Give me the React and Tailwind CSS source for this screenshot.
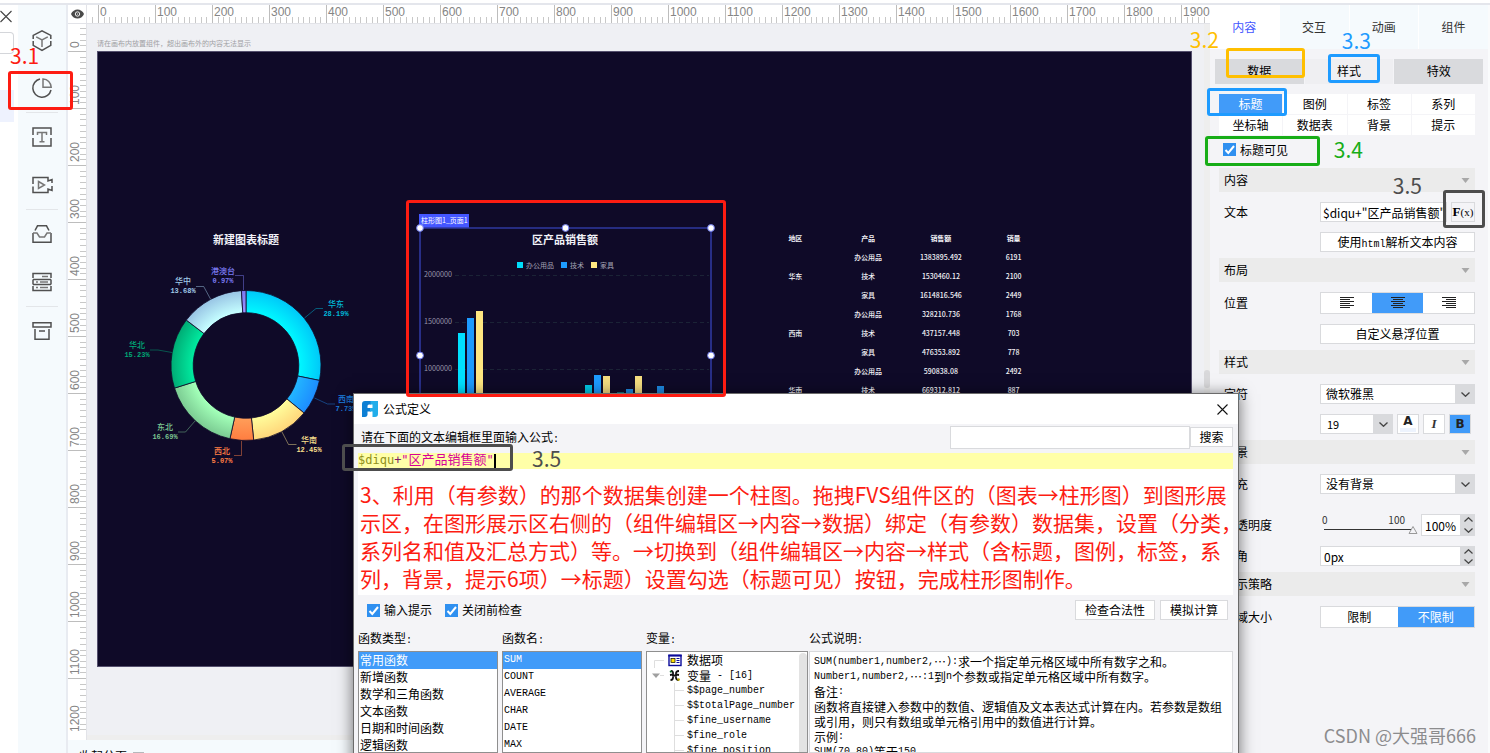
import React from "react";

const SANS = "font-['Noto_Sans_CJK_SC','Noto_Sans',sans-serif]";

/* ---------- small helpers ---------- */

// Latin runs are set in a half-width mono face beside full-width Chinese glyphs.
function Mixed({ children }) {
  const parts = String(children).match(/[\x20-\x7e]+|[^\x20-\x7e]+/g) || [];
  return parts.map((p, i) =>
    /^[\x20-\x7e]/.test(p) ? (
      <span key={i} className="whitespace-pre font-['Liberation_Mono',monospace] text-[10px]">{p}</span>
    ) : (
      <span key={i}>{p}</span>
    )
  );
}

function Check({ id, label }) {
  return (
    <label htmlFor={id} className="flex items-center gap-1">
      <span className="relative block size-[13px]">
        <input id={id} type="checkbox" defaultChecked className="block size-[13px] appearance-none bg-[#2f90f0]" />
        <svg viewBox="0 0 13 13" className="pointer-events-none absolute inset-0 size-[13px]" fill="none" stroke="#fff" strokeWidth="2">
          <path d="M2.5 7 L5.3 10 L11 3" />
        </svg>
      </span>
      {label}
    </label>
  );
}

/* ---------- left side ---------- */

const navIcons = {
  cube: (
    <>
      <path d="M1.2 9 V5.4 L10 0.8 L18.8 5.4 V9 M1.2 11 V15.4 L10 20.4 L18.8 15.4 V11" />
      <path d="M4.2 6.8 L10 9.8 L15.8 6.8 M10 9.8 V17" stroke="#777" />
    </>
  ),
  pie: (
    <>
      <path d="M8 1 A9.2 9.2 0 1 0 19 12" />
      <path d="M11 1 V9.3 H19.2 C19 4.5 15.6 1.2 11 1 Z" stroke="#777" />
    </>
  ),
  text: (
    <>
      <path d="M1 8 V1 H19 V8 M1 11 V19 H19 V11" />
      <path d="M5.5 8 V5.6 H14.5 V8 M10 5.6 V14.5 M7.5 14.8 H12.5" stroke="#777" />
    </>
  ),
  video: (
    <>
      <path d="M1 9 V2.6 H16 V6 L20 4.5 V8 M1 11.5 V17.4 H16 V14 L20 15.5 V11" />
      <path d="M6.5 6.5 L12.5 10 L6.5 13.5 Z" stroke="#777" />
    </>
  ),
  inbox: (
    <>
      <path d="M3 6.5 L5.5 1.8 H14.5 L17 6.5 M1 9 V18.2 H19 V9" />
      <path d="M1 9 H5 L7.5 13 H12.5 L15 9 H19" stroke="#777" />
    </>
  ),
  server: (
    <>
      <path d="M1 6 V1.6 H19 V6 M1 7.4 H19 M1 7.4 V12.6 M19 7.4 V12.6 M1 12.6 H19 M1 14 V18.4 H19 V14" />
      <path d="M10 4.6 H16 M4 10 H6 M8 10 H16 M4 15.6 H6 M8 15.6 H16" stroke="#777" />
    </>
  ),
  archive: (
    <>
      <path d="M1 1.8 H19 V6 H1 Z M3 8 V18.2 H17 V8" />
      <path d="M7 10 H13" />
    </>
  ),
};

function NavButton({ icon, label }) {
  return (
    <button type="button" aria-label={label} className="flex h-12 w-full items-center justify-center">
      <svg viewBox="0 0 20 20" className="size-5 overflow-visible" fill="none" stroke="#505050" strokeWidth="1.5">
        {navIcons[icon]}
      </svg>
    </button>
  );
}

const Rule = () => <div className="mx-2 h-px w-8 bg-[#e3e6e9]" />;

function LeftBars() {
  return (
    <>
      <div className="flex w-[18px] shrink-0 flex-col bg-white">
        <button type="button" aria-label="关闭" className="mt-[5px] h-[13px] w-3">
          <svg viewBox="0 0 12 13" className="h-[13px] w-3" stroke="#444" strokeWidth="1.1">
            <path d="M0.5 1 L11.5 12 M11.5 1 L0.5 12" />
          </svg>
        </button>
        <div className="mt-[9px] h-[22px] w-[14px] rounded-r-sm border border-l-0 border-[#d4d6da]" />
        <div className="mt-9 h-8 w-[14px] bg-[#eef2fe]" />
      </div>
      <nav className="flex w-[50px] shrink-0 flex-col border-r-2 border-[#e8ebf1] bg-[#f5fafd] pt-[11px]">
        <NavButton icon="cube" label="组件" />
        <NavButton icon="pie" label="图表" />
        <Rule />
        <NavButton icon="text" label="文本" />
        <NavButton icon="video" label="视频" />
        <Rule />
        <NavButton icon="inbox" label="素材" />
        <NavButton icon="server" label="数据" />
        <Rule />
        <NavButton icon="archive" label="归档" />
      </nav>
    </>
  );
}

/* ---------- rulers ---------- */

const STEP = 5.7;

function TopRuler() {
  const ticks = Array.from({ length: 197 }, (_, i) => i - 1);
  return (
    <svg className="h-[18px] w-full font-['Liberation_Sans',sans-serif]" shapeRendering="crispEdges">
      {ticks.map((t) => {
        const major = t % 10 === 0;
        return <rect key={t} x={Math.round(11 + t * STEP)} y={major ? 0 : 12} width="1" height={major ? 18 : 6} fill={major ? "#bdbdbd" : "#c8c8c8"} />;
      })}
      {Array.from({ length: 20 }, (_, k) => (
        <text key={k} x={13 + k * 57} y="11" fontSize="12" fill="#858585">{k * 100}</text>
      ))}
    </svg>
  );
}

function SideRuler() {
  const ticks = Array.from({ length: 124 }, (_, i) => i - 4);
  return (
    <svg className="h-full w-[18px] font-['Liberation_Sans',sans-serif]" shapeRendering="crispEdges">
      {ticks.map((t) => {
        const major = t % 10 === 0;
        return <rect key={t} x={major ? 0 : 12} y={Math.round(27 + t * STEP)} width={major ? 18 : 6} height="1" fill={major ? "#bdbdbd" : "#c8c8c8"} />;
      })}
      {Array.from({ length: 13 }, (_, k) => (
        <text key={k} transform={`translate(11 ${24 + k * 57}) rotate(-90)`} fontSize="12" fill="#858585">{k * 100}</text>
      ))}
    </svg>
  );
}

/* ---------- charts ---------- */

const slices = [
  { name: "华东", v: 28.19, a: "#00f6ff", b: "#00c8f8", c: "#00b8d8", tx: 336, ty: 304, line: "323,308.5 316,308.5 304.5,318" },
  { name: "西南", v: 7.73, a: "#22b4ff", b: "#1d8cff", c: "#1d80e0", tx: 346, ty: 399, line: "335,404 327.5,404 314.5,398" },
  { name: "华南", v: 12.45, a: "#fffb9a", b: "#ffd67a", c: "#f7df8c", tx: 309, ty: 440, line: "296.5,444.5 288.5,444.5 282,432" },
  { name: "西北", v: 5.07, a: "#ff9c58", b: "#ff7d40", c: "#ff7f45", tx: 222, ty: 451, line: "234,455.5 241.5,455.5 241.5,441" },
  { name: "东北", v: 16.69, a: "#a2ffb8", b: "#7bcb92", c: "#7cc892", tx: 165, ty: 427, line: "178,432 185.5,432 195,421" },
  { name: "华北", v: 15.23, a: "#00e89e", b: "#00ab74", c: "#00a876", tx: 137, ty: 345, line: "150,350 158,350 172,352.5" },
  { name: "华中", v: 13.68, a: "#c4fdff", b: "#98c4e4", c: "#a0cbe8", tx: 183, ty: 281, line: "196,286.5 203.7,286.5 210.5,299" },
  { name: "港澳台", v: 0.97, a: "#9a92ff", b: "#7b78f0", c: "#7b7bf2", tx: 223, ty: 271, line: "235,275.5 243.5,275.5 243.5,290" },
];

function Donut() {
  const cx = 246, cy = 365.5, R = 75, r = 52.8;
  let acc = 0;
  const at = (rad, f) => {
    const t = f * 2 * Math.PI - Math.PI / 2;
    return `${(cx + rad * Math.cos(t)).toFixed(2)} ${(cy + rad * Math.sin(t)).toFixed(2)}`;
  };
  return (
    <svg viewBox="118 230 240 240" className="absolute left-5 top-[178px] size-60">
      <text x="246" y="244" textAnchor="middle" fontSize="11" fontWeight="700" fill="#f2f2f8">新建图表标题</text>
      {slices.map((s, i) => {
        const a0 = acc / 100.01;
        acc += s.v;
        const a1 = acc / 100.01;
        const big = a1 - a0 > 0.5 ? 1 : 0;
        return (
          <g key={s.name}>
            <radialGradient id={`slice${i}`} gradientUnits="userSpaceOnUse" cx={cx} cy={cy} r={R}>
              <stop offset="0.72" stopColor={s.a} />
              <stop offset="1" stopColor={s.b} />
            </radialGradient>
            <path
              d={`M${at(R, a0)} A${R} ${R} 0 ${big} 1 ${at(R, a1)} L${at(r, a1)} A${r} ${r} 0 ${big} 0 ${at(r, a0)} Z`}
              fill={`url(#slice${i})`}
              stroke="#0f0a28"
              strokeWidth="0.8"
            />
            <polyline points={s.line} fill="none" stroke={s.c} strokeOpacity="0.6" strokeWidth="0.8" />
            <text x={s.tx} y={s.ty + 3} textAnchor="middle" fontSize="8" fontWeight="500" fill={s.c}>{s.name}</text>
            <text x={s.tx} y={s.ty + 12} textAnchor="middle" fontSize="7" fontFamily="Liberation Mono" fontWeight="700" fill={s.c}>{s.v.toFixed(2)}%</text>
          </g>
        );
      })}
    </svg>
  );
}

const bars = [
  [458, 333, "#00e0ff"], [467, 318, "#1d9bff"], [476, 311, "#ffe680"],
  [539, 393, "#6d6650"],
  [585, 385, "#00c8e6"], [594, 375, "#1d9bff"], [603, 376, "#f5dd80"],
  [617, 392, "#0d7080"], [626, 389, "#1d88e0"], [635, 376, "#f5dd80"],
  [657, 386, "#1d88e0"],
];

function BarChart() {
  return (
    <svg viewBox="414 208 304 192" className="absolute left-[316px] top-[156px] h-48 w-[304px]">
      <rect x="419" y="214" width="50" height="14" fill="#4456ff" />
      <text x="421" y="223" fontSize="7" fill="#fff">柱形图1_页面1</text>
      <text x="565" y="244" textAnchor="middle" fontSize="11" fontWeight="700" fill="#f2f2f8">区产品销售额</text>
      {[["办公用品", 517, "#00dcfa"], ["技术", 561, "#1d9bff"], ["家具", 591, "#ffe680"]].map(([n, x, c]) => (
        <g key={n}>
          <rect x={x} y="262" width="6" height="6" fill={c} />
          <text x={x + 9} y="267.5" fontSize="7" fill="#a3a1b3">{n}</text>
        </g>
      ))}
      {[["2000000", 275], ["1500000", 322], ["1000000", 369]].map(([n, y]) => (
        <g key={n}>
          <text x="452" y={y + 2} textAnchor="end" fontSize="7.2" fill="#9795a8">{n}</text>
          <path d={`M455 ${y + 0.5} H709`} stroke="#1b2336" strokeWidth="1" strokeDasharray="4 3" />
        </g>
      ))}
      {bars.map(([x, y, c]) => (
        <rect key={x} x={x} y={y} width="7" height={400 - y} fill={c} />
      ))}
      <path d="M420 400 V228 H711 V400" fill="none" stroke="#2f389f" strokeWidth="1.6" />
      {[[420, 228], [565.5, 228], [711, 228], [420, 355.5], [711, 355.5]].map(([x, y]) => (
        <circle key={`${x}-${y}`} cx={x} cy={y} r="3.4" fill="#fff" stroke="#6a76e8" strokeWidth="1" />
      ))}
    </svg>
  );
}

const tableRows = [
  ["", "办公用品", "1383895.492", "6191"],
  ["华东", "技术", "1530460.12", "2100"],
  ["", "家具", "1614816.546", "2449"],
  ["", "办公用品", "328210.736", "1768"],
  ["西南", "技术", "437157.448", "703"],
  ["", "家具", "476353.892", "778"],
  ["", "办公用品", "590838.08", "2492"],
  ["华南", "技术", "669312.812", "887"],
];

function SalesTable() {
  return (
    <table className="absolute left-[661px] top-[177px] w-[291px] table-fixed border-collapse text-center text-[7px] font-medium leading-[19px] text-[#f2f2f6]">
      <thead>
        <tr>
          {["地区", "产品", "销售额", "销量"].map((h) => (
            <th key={h} className="p-0 font-bold">{h}</th>
          ))}
        </tr>
      </thead>
      <tbody>
        {tableRows.map((r, i) => (
          <tr key={i}>
            {r.map((c, j) => (
              <td key={j} className="h-[19px] p-0">{c}</td>
            ))}
          </tr>
        ))}
      </tbody>
    </table>
  );
}

function Workspace() {
  return (
    <main className="flex min-w-0 flex-1 flex-col">
      <div className="flex h-[19px] shrink-0 border-b border-[#e2e3e8] bg-white">
        <div className="flex w-[19px] shrink-0 items-center justify-center border-r border-[#e2e3e8]">
          <svg viewBox="0 0 13 10" className="h-[10px] w-[13px]">
            <path d="M0 5 C2.5 -1 10.5 -1 13 5 C10.5 11 2.5 11 0 5 Z" fill="#4a4a4a" />
            <circle cx="6.5" cy="5" r="2.2" fill="#4a4a4a" stroke="#fff" strokeWidth="0.9" />
            <circle cx="6.5" cy="5" r="0.6" fill="#fff" />
          </svg>
        </div>
        <div className="min-w-0 flex-1"><TopRuler /></div>
      </div>
      <div className="flex min-h-0 flex-1">
        <div className="w-[19px] shrink-0 overflow-hidden border-r border-[#e2e3e8] bg-white"><SideRuler /></div>
        <div className="flex min-w-0 flex-1 flex-col bg-[#eff0f4]">
          <div className="flex min-h-0 flex-1">
            <div className="min-w-0 flex-1 pl-[10px] pr-3">
              <p className="pb-[3px] pt-[14px] text-[7px] leading-[10px] text-[#a0a0a4]">请在画布内放置组件，超出画布外的内容无法显示</p>
              <div className="relative aspect-[16/9] w-full overflow-hidden border border-[#55506e] bg-[#0f0a28]">
                <Donut />
                <BarChart />
                <SalesTable />
              </div>
            </div>
            <div className="flex w-[6px] shrink-0 flex-col bg-[#eeeeee] pt-[346px]">
              <div className="h-[18px] rounded-full bg-[#d9d9db]" />
            </div>
          </div>
          <div className="h-[5px] shrink-0 bg-[#eeeeee]" />
        </div>
      </div>
      <footer className="h-[13px] shrink-0 overflow-hidden bg-[#f5fafd]">
        <div className="flex h-8 items-center gap-[6px] pl-[11px] text-xs">
          <span>收起分页</span>
          <span className="mb-2 h-px w-[11px] bg-[#b5b8bc]" />
        </div>
      </footer>
    </main>
  );
}

/* ---------- property panel ---------- */

const box = "border border-[#d9dadd] bg-white";

function Section({ title, children }) {
  return (
    <section className="mt-[6px]">
      <h3 className="flex h-6 items-center justify-between bg-[#ebebeb] pl-[5px] pr-[5px]">
        {title}
        <svg viewBox="0 0 9 5" className="h-[5px] w-[9px]"><path d="M0.5 0 H8.5 L4.5 5 Z" fill="#a8a8a8" /></svg>
      </h3>
      <div className="flex flex-col gap-[10px] pt-[10px]">{children}</div>
    </section>
  );
}

function Row({ label, children }) {
  return (
    <div className="flex items-center pl-[5px]">
      <span className="w-24 shrink-0">{label}</span>
      <div className="flex min-w-0 flex-1">{children}</div>
    </div>
  );
}

function Select({ label, value, width, pad }) {
  return (
    <span className={`relative flex h-5 ${width}`}>
      <select aria-label={label} className={`h-5 w-full appearance-none ${box} ${pad}`}>
        <option>{value}</option>
      </select>
      <span className="pointer-events-none absolute inset-y-0 right-0 flex w-5 items-center justify-center bg-[#d9dadd]">
        <svg viewBox="0 0 9 5" className="h-[5px] w-[9px]" fill="none" stroke="#444" strokeWidth="1.3"><path d="M0.5 0.5 L4.5 4.3 L8.5 0.5" /></svg>
      </span>
    </span>
  );
}

function Spinner() {
  return (
    <span className="flex w-[14px] shrink-0 flex-col items-center justify-around bg-[#d9dadd]">
      <button type="button" aria-label="增加"><svg viewBox="0 0 9 5" className="block h-[5px] w-[9px]" fill="none" stroke="#444" strokeWidth="1.2"><path d="M0.5 4.5 L4.5 0.7 L8.5 4.5" /></svg></button>
      <button type="button" aria-label="减少"><svg viewBox="0 0 9 5" className="block h-[5px] w-[9px]" fill="none" stroke="#444" strokeWidth="1.2"><path d="M0.5 0.5 L4.5 4.3 L8.5 0.5" /></svg></button>
    </span>
  );
}

function AlignIcon({ kind }) {
  const widths = [14, 10, 14, 10, 14, 10];
  return (
    <svg viewBox="0 0 14 12" className="h-3 w-[14px]" shapeRendering="crispEdges">
      {widths.map((w, i) => (
        <rect key={i} x={kind === "left" ? 0 : kind === "right" ? 14 - w : (14 - w) / 2} y={i * 2} width={w} height="1" fill="#222" />
      ))}
    </svg>
  );
}

function Panel() {
  return (
    <aside className="w-[280px] shrink-0 border-r-2 border-[#fafbfc] bg-[#f4f4f7] text-xs leading-4 text-black">
      <div className="grid h-11 grid-cols-4 gap-px bg-white">
        {["内容", "交互", "动画", "组件"].map((t, i) => (
          <button key={t} type="button" className={i === 0 ? "bg-white text-[#4456ff]" : "bg-[#f5fafd] text-[#333]"}>{t}</button>
        ))}
      </div>
      <div className="mx-[5px] mt-[10px] grid h-[25px] grid-cols-3 gap-px leading-[22px]">
        <button type="button" className="bg-[#d9dadd] pb-[2px]">数据</button>
        <button type="button" className="bg-[#efeff2] pb-[2px]">样式</button>
        <button type="button" className="bg-[#d9dadd] pb-[2px]">特效</button>
      </div>
      <div className="ml-[9px] mr-[13px]">
        <div className="mt-[10px] grid grid-cols-4 gap-px">
          {["标题", "图例", "标签", "系列", "坐标轴", "数据表", "背景", "提示"].map((t, i) => (
            <button key={t} type="button" className={i === 0 ? "h-5 bg-[#419bf9] text-white" : "h-5 bg-white"}>{t}</button>
          ))}
        </div>
        <div className="flex h-[27px] items-center pl-1 pt-[2px]"><Check id="title-visible" label="标题可见" /></div>

        <Section title="内容">
          <Row label="文本">
            <input aria-label="文本" defaultValue={'$diqu+"区产品销售额"'} className={`h-5 min-w-0 flex-1 px-[2px] ${box}`} />
            <button type="button" className="ml-1 h-5 w-6 shrink-0 border border-[#d9dadd] font-['Liberation_Serif',serif] text-[11px] leading-[18px]">
              <b className="text-[13px]">F</b>(x)
            </button>
          </Row>
          <Row><button type="button" className={`h-5 flex-1 leading-[18px] ${box}`}><Mixed>使用html解析文本内容</Mixed></button></Row>
        </Section>

        <Section title="布局">
          <Row label="位置">
            <div className={`grid h-[22px] flex-1 grid-cols-3 ${box}`}>
              <button type="button" aria-label="左对齐" className="flex items-center justify-center"><AlignIcon kind="left" /></button>
              <button type="button" aria-label="居中" className="flex items-center justify-center bg-[#419bf9]"><AlignIcon kind="center" /></button>
              <button type="button" aria-label="右对齐" className="flex items-center justify-center"><AlignIcon kind="right" /></button>
            </div>
          </Row>
          <Row><button type="button" className={`h-5 flex-1 leading-[18px] ${box}`}>自定义悬浮位置</button></Row>
        </Section>

        <Section title="样式">
          <Row label="字符"><Select label="字体" value="微软雅黑" width="flex-1" pad="pl-[5px]" /></Row>
          <Row>
            <Select label="字号" value="19" width="w-[73px] text-[11px]" pad="pl-[6px]" />
            <button type="button" aria-label="颜色" className={`ml-1 flex h-5 w-[22px] flex-col items-center font-['DejaVu_Sans',sans-serif] text-xs font-bold leading-[13px] text-[#222] ${box}`}>
              A<span className="h-1 w-4 bg-[#edf3fd]" />
            </button>
            <button type="button" className={`ml-1 h-5 w-[22px] font-['Liberation_Serif',serif] text-[13px] font-bold italic leading-[18px] text-[#333] ${box}`}>I</button>
            <button type="button" className="ml-1 h-5 w-[22px] border border-[#d9dadd] bg-[#419bf9] font-['DejaVu_Sans',sans-serif] text-xs font-bold leading-[18px] text-[#222]">B</button>
          </Row>
        </Section>

        <Section title="背景">
          <Row label="填充"><Select label="填充" value="没有背景" width="flex-1" pad="pl-[5px]" /></Row>
          <div className="pt-[10px]">
            <Row label="不透明度">
              <div className="relative h-[22px] min-w-0 flex-1">
                <div className="flex justify-between pl-[2px] pr-4 text-[10px] leading-3 text-[#333]"><span>0</span><span>100</span></div>
                <svg viewBox="0 0 101 10" className="h-[10px] w-full" fill="none">
                  <path d="M4 3.5 H91" stroke="#333" />
                  <path d="M93 0.5 L97 7.5 H89 Z" stroke="#999" fill="#f4f4f7" />
                </svg>
                <input type="range" aria-label="不透明度" defaultValue="100" className="absolute inset-0 h-full w-full opacity-0" />
              </div>
              <input aria-label="不透明度数值" defaultValue="100%" className={`h-[22px] w-10 shrink-0 px-[3px] ${box}`} />
              <Spinner />
            </Row>
          </div>
          <Row label="圆角">
            <input aria-label="圆角" defaultValue="0px" className={`h-5 min-w-0 flex-1 px-[3px] ${box}`} />
            <Spinner />
          </Row>
        </Section>

        <Section title="显示策略">
          <Row label="区域大小">
            <div className={`grid h-[22px] flex-1 grid-cols-2 ${box}`}>
              <button type="button">限制</button>
              <button type="button" className="bg-[#419bf9] text-white">不限制</button>
            </div>
          </Row>
        </Section>
      </div>
    </aside>
  );
}

/* ---------- formula dialog ---------- */

function ListBox({ items, label }) {
  return (
    <ul aria-label={label} className="w-[140px] shrink-0 overflow-hidden border border-[#8f8f8f] bg-white">
      {items.map((t, i) => (
        <li key={t}>
          <button type="button" className={i === 0 ? "flex h-[17px] w-full items-center bg-[#419bf9] pb-[2px] pl-px text-white" : "flex h-[17px] w-full items-center pb-[2px] pl-px"}>
            <Mixed>{t}</Mixed>
          </button>
        </li>
      ))}
    </ul>
  );
}

function Tree() {
  return (
    <div className="relative w-[162px] shrink-0 overflow-hidden border border-[#8f8f8f] bg-white">
      <div className="flex h-4 items-center pl-[7px]">
        <svg viewBox="0 0 33 16" className="h-4 w-[33px]">
          <path d="M0.5 16 V8.5 H10" fill="none" stroke="#dedede" />
          <rect x="15" y="3.5" width="12" height="10" fill="#fff" stroke="#0a0a9a" strokeWidth="1.4" />
          <path d="M14.3 3.5 H27.7" stroke="#0a0a9a" strokeWidth="2" />
          <rect x="17" y="6.5" width="4" height="4" fill="#ffe100" stroke="#000" strokeWidth="0.7" />
          <path d="M22.5 6.5 H25.5 M22.5 8.5 H25.5 M22.5 10.5 H25.5" stroke="#0a0a9a" />
        </svg>
        数据项
      </div>
      <div className="flex h-[15px] items-center pl-1">
        <svg viewBox="0 0 36 15" className="h-[15px] w-9">
          <path d="M1 5.5 H9 L5 10 Z" fill="#a0a0a0" />
          <path d="M9 7.5 H13" stroke="#dedede" />
          <path d="M20 3 Q22.5 3 22 6.5 L19 7 M28 3 Q24.5 3 25 6.5 L28 7 M19.5 12 Q22.5 12 22 8.5 M28 12 Q24.5 12 25 8.5" fill="none" stroke="#111" strokeWidth="1.8" />
          <path d="M21 7.5 H26" stroke="#111" strokeWidth="2" />
          <circle cx="19.8" cy="3.6" r="1.1" fill="#0a6a2a" />
          <circle cx="27.6" cy="11.6" r="1.3" fill="#b3a400" />
        </svg>
        <Mixed>变量 - [16]</Mixed>
      </div>
      <ul className="ml-[27px] border-l border-[#dedede]">
        {["$$page_number", "$$totalPage_number", "$fine_username", "$fine_role", "$fine_position"].map((t) => (
          <li key={t} className="flex h-[15px] items-center">
            <span className="mr-[3px] h-px w-[9px] bg-[#dedede]" />
            <Mixed>{t}</Mixed>
          </li>
        ))}
      </ul>
      <div className="absolute bottom-0 right-0 top-px w-2 rounded-t-full bg-[#e3e3e3]" />
    </div>
  );
}

const note = [
  "3、利用（有参数）的那个数据集创建一个柱图。拖拽FVS组件区的（图表→柱形图）到图形展",
  "示区，在图形展示区右侧的（组件编辑区→内容→数据）绑定（有参数）数据集，设置（分类，",
  "系列名和值及汇总方式）等。→切换到（组件编辑区→内容→样式（含标题，图例，标签，系",
  "列，背景，提示6项）→标题）设置勾选（标题可见）按钮，完成柱形图制作。",
];

const helpText = [
  "SUM(number1,number2,…):求一个指定单元格区域中所有数字之和。",
  "Number1,number2,…:1到n个参数或指定单元格区域中所有数字。",
  "备注:",
  "函数将直接键入参数中的数值、逻辑值及文本表达式计算在内。若参数是数组",
  "或引用，则只有数组或单元格引用中的数值进行计算。",
  "示例:",
  "SUM(70,80)等于150。",
];

function Dialog() {
  return (
    <div role="dialog" aria-label="公式定义" className="absolute bottom-0 left-[354px] top-[394px] flex w-[884px] flex-col overflow-hidden bg-[#f4f4f7] text-xs leading-4 text-black">
      <header className="flex h-[30px] shrink-0 items-center bg-white pl-2 pr-[10px]">
        <svg viewBox="0 0 16 16" className="size-4">
          <path d="M0 3 Q0 0 3 0 H9 V3.5 H7 Q5.5 3.5 5.5 5 V7 H9 V10.5 H5.5 V14 Q5 16 3 16 H0 Z" fill="#0d7fd4" />
          <path d="M8.5 0 H16 V13 Q16 16 13 16 H10.5 V10.5 H8 V7 H10.5 V3.5 H8.5 Z" fill="#22aeea" />
        </svg>
        <h2 className="ml-[5px] flex-1">公式定义</h2>
        <button type="button" aria-label="关闭">
          <svg viewBox="0 0 11 11" className="block size-[11px]" stroke="#111" strokeWidth="1.1"><path d="M0.5 0.5 L10.5 10.5 M10.5 0.5 L0.5 10.5" /></svg>
        </button>
      </header>
      <div className="flex h-[29px] shrink-0 items-start pl-[7px] pr-[5px] pt-[2px]">
        <label htmlFor="fn-search" className="flex-1 pt-[3px]"><Mixed>请在下面的文本编辑框里面输入公式:</Mixed></label>
        <input id="fn-search" className={`h-[23px] w-60 px-1 ${box}`} />
        <button type="button" className={`mt-px h-5 w-[43px] leading-[18px] ${box}`}>搜索</button>
      </div>
      <div className="ml-1 mr-[5px] h-[142px] shrink-0 bg-white">
        <div className="flex h-4 items-center bg-[#ffffa8] font-['DejaVu_Sans_Mono','Noto_Sans_CJK_SC',monospace] text-xs leading-[14px]">
          <span className="pb-[2px] text-[#8f8f1a]">$diqu</span>
          <span className="pb-[2px] text-[#7a1a6a]">+</span>
          <span className="pb-[2px] text-[#d6009c]">"<span className="text-[13px]">区产品销售额</span>"</span>
          <span className="h-[15px] w-[2px] bg-black" />
        </div>
        <p className="pl-[2px] pt-[11px] text-[21px] leading-7 text-[#fd1c12]">
          {note.map((l) => (
            <span key={l} className="block whitespace-nowrap">{l}</span>
          ))}
        </p>
      </div>
      <div className="flex shrink-0 items-center gap-[5px] pl-[13px] pr-[10px] pt-[5px] leading-[18px]">
        <Check id="hint" label="输入提示" />
        <div className="flex-1 pl-2"><Check id="precheck" label="关闭前检查" /></div>
        <button type="button" className={`h-5 w-20 ${box}`}>检查合法性</button>
        <button type="button" className={`h-5 w-[68px] ${box}`}>模拟计算</button>
      </div>
      <div className="flex h-[31px] shrink-0 items-center pl-1 pt-[7px]">
        <span className="w-36"><Mixed>函数类型:</Mixed></span>
        <span className="w-36"><Mixed>函数名:</Mixed></span>
        <span className="w-[163px]"><Mixed>变量:</Mixed></span>
        <span><Mixed>公式说明:</Mixed></span>
      </div>
      <div className="ml-1 mr-[5px] flex min-h-0 flex-1 items-stretch">
        <ListBox label="函数类型" items={["常用函数", "新增函数", "数学和三角函数", "文本函数", "日期和时间函数", "逻辑函数"]} />
        <div className="w-1 shrink-0" />
        <ListBox label="函数名" items={["SUM", "COUNT", "AVERAGE", "CHAR", "DATE", "MAX"]} />
        <div className="w-1 shrink-0" />
        <Tree />
        <div className="ml-px min-w-0 flex-1 overflow-hidden border border-[#d9dadd] bg-white pl-1 pt-[2px]">
          {helpText.map((l) => (
            <p key={l} className="flex h-[15px] items-center whitespace-nowrap leading-[15px]"><Mixed>{l}</Mixed></p>
          ))}
        </div>
      </div>
    </div>
  );
}

/* ---------- callouts over the page ---------- */

function Callouts() {
  const b = "absolute rounded-[3px] border-[3px]";
  const t = "absolute text-[21px] leading-6";
  return (
    <div className="pointer-events-none absolute inset-0">
      <div className={`${b} left-2 top-[71px] h-[39px] w-[65px] border-[#fd1c12]`} />
      <span className={`${t} left-[10px] top-[43px] text-[#fd1c12]`}>3.1</span>
      <div className={`${b} left-[406px] top-[200px] h-[197px] w-[320px] border-[#fd1c12]`} />
      <div className={`${b} left-[342px] top-[444px] h-[27px] w-[171px] border-[#4d4d4d]`} />
      <span className={`${t} left-[532px] top-[446px] text-[#4d4d4d]`}>3.5</span>
      <div className={`${b} right-[185px] top-12 h-[30px] w-[79px] border-[#ffbf00]`} />
      <span className={`${t} right-[271px] top-[27px] text-[#ffbf00]`}>3.2</span>
      <div className={`${b} right-[110px] top-[54px] h-[29px] w-[52px] border-[#1e9bff]`} />
      <span className={`${t} right-[119px] top-7 text-[#1e9bff]`}>3.3</span>
      <div className={`${b} right-[203px] top-[88px] h-7 w-20 border-[#1e9bff]`} />
      <div className={`${b} right-[170px] top-[136px] h-[30px] w-[115px] border-[#17ad17]`} />
      <span className={`${t} right-[127px] top-[137px] text-[#17ad17]`}>3.4</span>
      <div className={`${b} right-[5px] top-[190px] h-[38px] w-[42px] border-[#4d4d4d]`} />
      <span className={`${t} right-[68px] top-[173px] text-[#4d4d4d]`}>3.5</span>
      <span className="absolute bottom-[6px] right-[14px] text-[18px] leading-6 text-[#8c8c8e]">CSDN @大强哥666</span>
    </div>
  );
}

export default function App() {
  return (
    <div lang="zh-CN" className={`relative flex h-screen flex-col overflow-hidden bg-white ${SANS}`}>
      <div className="h-[5px] shrink-0 border-b-2 border-[#e4e6ec]" />
      <div className="flex min-h-0 flex-1">
        <LeftBars />
        <Workspace />
        <Panel />
      </div>
      <div className="absolute -bottom-4 left-[354px] top-[394px] w-[884px] shadow-[0_2px_14px_2px_rgba(0,0,0,0.5)] ring-1 ring-[#6b6b6b]" />
      <Dialog />
      <Callouts />
    </div>
  );
}
